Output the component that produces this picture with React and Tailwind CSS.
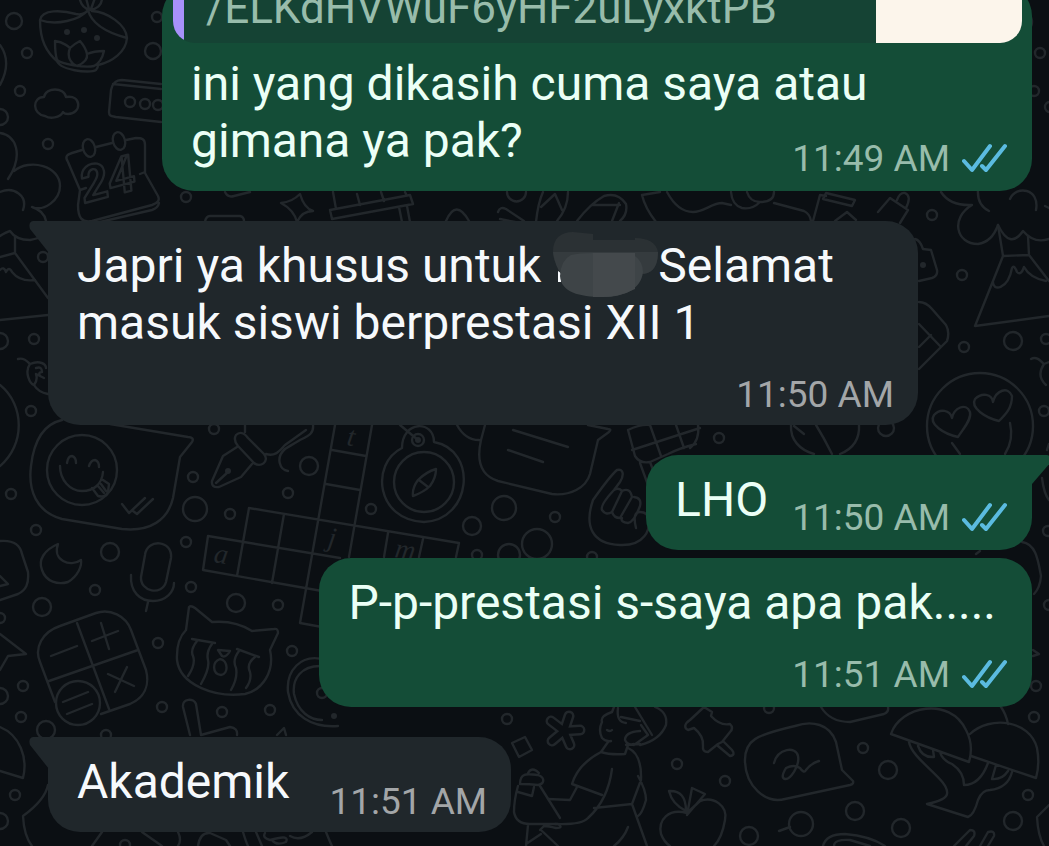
import React from 'react';

const rings = [
  [14, 21, 8], [27, 53, 5], [20, 91, 5], [153, 51, 8], [157, 17, 5], [0, 117, 8], [48, 144, 5], [186, 197, 5],
  [130, 102, 5], [145, 104, 5], [158, 105, 5], [43, 257, 5], [34, 339, 5], [0, 341, 8], [31, 411, 5],
  [82, 470, 35], [214, 429, 5], [193, 477, 5], [195, 509, 12], [230, 514, 5], [11, 494, 5], [36, 530, 5],
  [110, 552, 9], [186, 542, 5], [191, 587, 5], [95, 590, 5], [42, 607, 9], [309, 466, 9], [288, 493, 5],
  [236, 603, 9], [278, 605, 5], [0, 618, 5], [424, 482, 30], [418, 440, 6], [371, 509, 5], [504, 508, 12],
  [555, 517, 5], [472, 526, 9], [537, 544, 15], [509, 555, 11], [477, 555, 5], [592, 557, 5], [719, 438, 5],
  [886, 428, 8], [158, 643, 5], [292, 651, 5], [162, 707, 5], [23, 686, 5], [0, 696, 8], [21, 717, 5],
  [46, 730, 9], [222, 712, 5], [270, 710, 5], [106, 735, 5], [15, 795, 5], [0, 821, 8], [155, 757, 17],
  [125, 845, 5], [78, 703, 22], [322, 693, 5], [507, 719, 5], [677, 764, 5], [725, 781, 5], [749, 836, 9],
  [769, 708, 5], [863, 748, 5], [888, 770, 9], [801, 824, 12], [855, 811, 9], [901, 828, 9], [1028, 795, 5],
  [1034, 717, 5], [1013, 821, 9], [932, 215, 5], [962, 275, 5], [964, 347, 5], [1013, 341, 9], [1046, 339, 5],
  [980, 426, 53], [1044, 411, 5], [1048, 531, 5], [1036, 686, 5], [1049, 605, 5], [1022, 22, 10], [1040, 53, 5],
  [1034, 91, 5], [1050, 107, 5],
];

const doodles = [
  // bowl with lotus
  'M40 20C42 9 62 10 76 14C84 16 88 10 88 10C92 26 112 34 127 38C126 52 112 62 98 65M40 20C40 40 46 52 58 62M40 20C56 26 80 20 88 10M92 11C107 12 126 24 127 38',
  'M55 41C64 42 70 48 70 48Q74 44 80 41Q86 48 87 54Q94 51 104 51C102 60 98 64 94 66C84 68 62 64 57 60C55 54 55 46 55 41ZM70 48C66 58 72 64 77 66M87 54C88 60 82 64 77 66M57 60C58 70 90 74 96 70Q98 68 98 65',
  'M80 0Q82 8 90 10Q102 8 102 -2M86 -2L89 9M95 -2L91 9M0 45C8 56 8 70 0 85',
  // cloud, box
  'M45 116C32 114 32 97 44 97C46 87 64 87 66 97C82 94 82 114 68 114Q64 114 63 112C60 118 50 119 45 116Z',
  'M161 84L122 80C116 80 112 84 111 90L109 112C109 116 111 116 116 117L161 122M113 84L161 89',
  // flower and calendar
  'M0 133C16 135 24 155 8 179M14 171C30 158 60 166 60 186C60 200 44 212 32 207C42 210 45 216 46 221M0 192C14 186 28 196 23 210',
  'M82 150L72 153C66 155 65 157 68 162L80 190L78 205C78 218 82 223 92 221L152 205C158 203 160 200 158 196L145 173L145 145C145 139 142 138 136 138L126 140M96 147L112 143M80 190L86 188M140 174L145 172M159 203Q158 208 152 210L100 222',
  // tree on the left edge
  'M0 236Q6 232 10 231Q16 240 30 240Q40 238 42 236M15 236L15 253L0 257M15 253L48 298M0 270Q4 266 6 272Q9 266 12 272Q20 282 35 280M0 320L48 315',
  'M18 359C24 357 28 362 30 364C40 360 46 364 46 368M30 364C24 372 30 384 34 385Q38 380 36 374L44 378M34 385Q38 392 48 394M36 368Q42 366 42 372Q38 372 40 376M0 385C25 405 25 445 0 466',
  // chat bubble with a smiley
  'M62 420C44 424 34 440 31 466C28 490 36 512 62 519L122 529C150 532 168 520 173 498L180 457L192 442C194 439 192 437 188 437L110 424',
  'M67 463Q68 456 72 456Q76 457 76 463M89 466Q91 460 95 460Q99 461 99 467M60 466C60 480 70 491 82 491C94 491 102 484 103 472M92 488L98 496Q106 498 108 492L109 484L103 480M98 486L104 493M101 484L106 491M122 504L129 513L145 498M133 511L137 514L153 499',
  // pen
  'M237 447L223 456L212 481Q211 488 219 487L241 477L252 464M216 483L228 472M236 435C241 430 246 435 248 438L264 454C270 462 260 468 254 463L238 446Q233 440 236 435ZM245 432L245 425M266 454C276 457 280 450 285 445L306 430M313 425C314 434 308 436 300 440C290 446 288 447 285 449C275 458 280 470 288 471',
  // crossword
  'M249 508L459 543M208 536L340 558M203 570L322 591M249 508L237 576M284 514L272 583M208 536L203 570M335 425L300 623L322 627M372 425L349 557M332 450L366 456M326 484L360 490M388 533L384 557M423 539L419 557M459 543L456 557',
  // mic, moon
  'M145 555C147 538 173 540 171 558L166 582C162 596 140 592 141 577ZM131 575C130 592 140 601 153 601C166 601 174 592 174 583M148 602L146 611',
  'M58 544C44 550 38 560 42 570C46 582 58 585 68 582C78 576 82 566 81 560C70 568 52 560 58 544Z',
  'M0 541C12 540 20 544 22 554L28 572C29 584 26 590 18 594L0 600M0 576L8 584L0 586',
  // compass
  'M402 448C370 464 376 520 424 522C472 520 478 450 434 442C434 420 402 420 402 448M400 425L418 440M436 469Q426 472 418 480Q412 488 413 496Q424 492 430 486Q436 478 436 469ZM419 480L428 487',
  'M485 425L481 440C476 462 482 476 498 481L552 494C570 496 586 488 590 474L598 440L609 432Q612 429 608 429L588 425M457 425Q465 440 479 440M513 430L568 447M508 450L543 462',
  // hand
  'M617 470Q610 476 593 500C584 526 592 544 620 545C644 546 652 530 648 515M617 470C624 468 624 476 620 482L614 490Q600 505 602 510Q606 516 612 512M612 512L622 491Q630 487 632 497L620 518Q614 518 612 512M622 518Q620 522 628 523Q634 522 640 506Q642 498 634 497M636 528Q632 512 640 512Q648 512 649 520M614 490Q619 487 622 491',
  'M628 430L635 456Q640 464 650 462L668 454Q680 448 696 444M628 430Q640 424 650 425M632 450L700 428M650 425L661 456M676 425L684 448M640 463L648 485M650 462L655 475M698 425Q700 440 690 448',
  'M791 425C790 440 800 450 814 454M859 425C860 442 850 450 840 454M794 426L804 434M816 425C824 438 826 442 832 454',
  // calculator
  'M96 613L60 626C42 632 34 648 40 662L55 702M96 613C110 608 126 616 131 630L146 670C150 686 144 698 130 704L101 714M77 623L109 709M49 681L138 650M51 656L77 646M92 641L118 631M101 623L109 649M108 674L134 686M127 667L115 692M63 702L88 692M67 714L92 704M0 634L26 654L8 656L0 670',
  // crying cat
  'M186 630L189 607Q191 605 195 608L212 622Q235 620 252 631L274 629Q278 628 278 633L270 650C275 672 262 690 245 694C215 698 180 685 177 660Q176 640 186 630M192 639L215 643M237 649L259 657',
  'M197 641Q190 650 193 656Q196 664 188 676M212 644Q206 652 208 660Q210 668 201 684M239 651Q232 660 236 668Q238 678 231 690M255 657Q246 664 250 672Q252 680 246 688M218 650L230 651Q226 658 222 656ZM220 659C212 662 212 674 221 675C229 674 228 660 220 659Z',
  // magnifier and sticks
  'M326 660C300 652 286 672 288 692C292 716 312 728 338 726M320 666C302 666 292 678 294 694C298 712 310 720 322 720M190 735L183 707C182 698 194 698 196 704L201 735L230 727Q238 728 237 735M277 735L284 728L286 735',
  'M0 727C20 735 28 758 23 778L0 771M48 785Q45 800 23 816Q24 836 32 846M102 832L92 846M142 832L162 846M178 832Q182 840 178 846M198 846Q200 832 210 833L226 840L230 846M243 832Q246 842 248 846M256 832L262 846M265 833Q262 838 270 840Q290 834 286 842Q276 846 272 840M290 836Q300 842 312 832M326 832Q330 842 332 846',
  // hiker
  'M614 707L612 712Q600 716 602 722Q598 730 602 738Q606 742 611 741M608 742L601 752M607 730Q610 732 612 730M601 752Q610 755 625 754L628 745M601 752Q578 764 572 784L602 795M628 748Q642 754 641 780L632 804L594 808M612 769Q608 800 588 818Q582 825 555 824M577 787L570 800L548 799M638 776Q646 790 646 800Q642 814 638 816M632 804L647 846M628 827Q624 838 614 846',
  'M618 708Q616 722 626 723M621 717L640 721M635 707L652 735M655 707Q668 712 666 725Q660 740 640 745M640 731Q625 732 625 740Q628 746 634 744M641 725L648 735L634 745M626 745L640 744M512 743L525 737L532 750L519 757Z',
  'M540 786L560 818M520 784C520 772 528 774 538 775C546 778 544 784 538 785C530 784 522 784 520 784ZM528 773Q532 766 539 773M518 786Q514 800 514 812Q516 824 530 824L558 824Q564 828 556 828Q548 826 544 826L540 830M518 792L532 796L534 787M528 825L526 846M541 830L558 846M541 834L526 844',
  // pin, apple
  'M694 728L688 730C684 728 684 724 690 720L704 707L712 712L711 716Q720 726 730 724Q734 728 730 732L722 742L718 744L708 752Q702 752 703 746Q704 736 694 728M718 746L730 756Q736 755 732 750L724 742',
  'M687 813C668 808 658 820 661 834Q664 842 670 846M687 813L700 801C714 796 728 806 725 820Q722 838 714 846M687 815L692 788L705 794L687 815M686 811Q672 804 669 791Q686 790 686 811',
  'M795 726C812 720 830 724 836 742L842 770L853 781Q854 784 850 785L785 799C765 804 746 786 745 762C744 740 756 735 795 726M774 763C778 748 796 746 798 756C800 766 790 780 785 779Q780 778 786 768Q794 764 800 768Q804 774 806 770Q810 764 819 761M779 831L790 827M821 707Q830 722 850 722L884 714Q889 712 888 707',
  // mushrooms
  'M891 734C900 706 950 696 966 730Q974 745 969 762ZM970 734C990 715 1030 720 1037 748Q1040 764 1036 778L971 756M909 742C912 760 950 780 947 794Q946 800 927 804L968 817Q974 815 978 800Q982 790 990 790Q1008 788 1012 772M918 746Q922 758 934 757L933 750M940 752Q942 760 952 764Q964 772 964 785Q980 785 988 763M996 765L992 779Q1002 780 1008 771M1001 707Q1006 714 1008 724',
  'M823 846Q826 834 845 834Q870 836 885 846M834 846Q834 839 850 840L870 846M954 846L970 830Q976 830 974 836L966 846M980 846L988 832Q995 830 994 836L988 846M1049 805L1037 817Q1038 836 1044 846',
  // volcano and the right edge
  'M941 192Q950 206 972 205C950 218 956 244 978 244Q992 242 998 225Q1010 250 1023 231Q1034 244 1049 239M978 190Q977 205 989 211M1010 199C1016 185 1040 188 1036 210M1045 206L1049 208',
  'M998 225L1003 256L1029 255L1028 236M1003 256L975 326L1049 316M1029 255L1049 281M993 281C992 292 1008 290 1012 268Q1014 264 1017 272Q1021 276 1024 267Q1030 278 1046 281',
  'M878 212L890 198L908 210L900 223M897 200Q900 192 905 193Q912 196 906 208M915 239Q920 240 923 249L931 250L937 270Q938 276 932 278L919 281M919 302Q926 302 932 309L946 325Q950 332 947 341L919 369M919 324L940 346M919 347L931 335',
  'M958 437C944 434 928 424 934 415C940 408 950 410 952 418C954 408 966 402 970 412C972 420 962 430 958 437ZM999 421C986 418 970 408 975 399C982 392 992 394 993 402C996 390 1008 386 1012 396C1012 408 1006 414 999 421ZM1010 423Q1014 440 1005 454M952 443L960 454',
  'M1031 359C1036 356 1040 360 1044 364L1049 362M1044 364Q1036 376 1046 385M1042 478Q1044 494 1049 500M976 554L980 551M1022 542C1036 544 1038 560 1041 576Q1040 588 1034 594M1033 650L1039 654L1033 656M1047 450L1049 444',
  // strip under the first message
  'M205 222Q206 216 210 216L240 216Q244 217 244 221M281 203Q292 202 300 194Q304 208 313 211Q302 211 297 222Q294 210 281 203ZM330 210L410 195L413 204L332 219ZM333 192L336 209M357 194L360 205M381 192L384 201M405 192L407 196M399 207L402 222M407 206L410 222M225 192Q228 198 234 196L250 192',
  'M446 221Q456 198 469 221M507 192A9 9 0 0 0 526 192M498 212Q500 206 506 209L524 221M500 219L515 222M536 222Q538 203 543 192M568 192Q568 208 557 221M541 207L555 194L562 210M577 221Q590 204 604 196Q618 192 626 204Q628 214 620 221M592 205L620 205M619 203L612 221M656 222Q645 208 642 195L660 192',
  'M667 192C674 205 683 212 693 212C704 212 712 203 722 203L731 205M731 192Q732 205 742 208Q752 210 760 202M747 192Q750 202 760 202Q774 202 774 192M774 203L804 211Q810 214 811 221M813 221L820 195L826 196M826 193L823 199L852 206L855 200ZM835 221L847 212L856 220',
];

function Wallpaper() {
  return (
    <svg className="absolute inset-0 h-full w-full" fill="none" stroke="#22272b" strokeWidth="2.4" strokeLinejoin="round" strokeLinecap="round" aria-hidden="true">
      {rings.map(([x, y, r]) => <circle key={`${x}-${y}`} cx={x} cy={y} r={r} />)}
      {doodles.map((d) => <path key={d} d={d} />)}
      <ellipse cx="89" cy="148" rx="6" ry="9" transform="rotate(-15 89 148)" />
      <ellipse cx="119" cy="141" rx="6" ry="9" transform="rotate(-15 119 141)" />
      <g fill="#22272b" stroke="none">
        <circle cx="67" cy="32" r="3" /><circle cx="84" cy="30" r="3" /><circle cx="97" cy="38" r="3" />
        <circle cx="228" cy="471" r="3" /><circle cx="418" cy="440" r="3" /><circle cx="334" cy="716" r="3" />
        <circle cx="923" cy="265" r="3" />
      </g>
      <path d="M564 731L569 716M564 731L580 730M564 731L570 745M564 731L552 741M564 731L551 721" strokeWidth="11" />
      <path d="M564 731L569 716M564 731L580 730M564 731L570 745M564 731L552 741M564 731L551 721" strokeWidth="6" stroke="#0b0f13" />
      <text x="85" y="203" transform="rotate(-15 85 203)" className="font-['Roboto'] text-[50px] font-bold italic">24</text>
      <g fill="#22272b" stroke="none" className="font-['Liberation_Serif'] text-[28px] italic">
        <text x="213" y="562" transform="rotate(9 213 562)">a</text>
        <text x="346" y="445" transform="rotate(9 346 445)">t</text>
        <text x="327" y="546" transform="rotate(9 327 546)">j</text>
        <text x="394" y="557" transform="rotate(9 394 557)">m</text>
      </g>
    </svg>
  );
}

function ReadTicks() {
  return (
    <svg className="h-8 w-[46px]" viewBox="0 0 46 32" fill="none" stroke="#5bbbe0" strokeWidth="4" strokeLinecap="round" strokeLinejoin="round" role="img" aria-label="Read">
      <path d="M2 18L10 27L28 3M20 23L24 27L43 3" />
    </svg>
  );
}

function Time({ children, out, className = '' }) {
  return (
    <span className={`flex shrink-0 items-center justify-end gap-3 text-[37px] leading-[44px] ${out ? 'text-[#98bcab]' : 'text-[#a3a6a8]'} ${className}`}>
      <time>{children}</time>
      {out && <ReadTicks />}
    </span>
  );
}

function Bubble({ out, tail, className = '', children }) {
  const side = out
    ? `self-end bg-[#144d37] text-[#ebfff6] pb-[10px] ${tail ? 'rounded-tr-none' : ''}`
    : `self-start bg-[#20272b] text-[#f6f9fc] pb-2 ${tail ? 'rounded-tl-none' : ''}`;
  return (
    <article className={`relative max-w-[870px] rounded-[32px] pl-[29px] pr-6 ${side} ${className}`}>
      {tail && !out && (
        <svg className="absolute -left-[19px] top-0 h-8 w-5" viewBox="0 0 20 32" fill="#20272b" aria-hidden="true">
          <path d="M4 0H20V32L1 8Q-1 1 4 0Z" />
        </svg>
      )}
      {tail && out && (
        <svg className="absolute -right-[19px] top-0 h-8 w-5" viewBox="0 0 20 32" fill="#144d37" aria-hidden="true">
          <path d="M0 0H16Q21 1 19 8L1 29H0Z" />
        </svg>
      )}
      {children}
    </article>
  );
}

function HiddenName() {
  return (
    <span className="relative inline-block h-8 w-[105px]" role="img" aria-label="hidden name">
      <svg className="absolute -top-5 left-0 h-[68px] w-[106px]" viewBox="0 0 106 68" aria-hidden="true">
        <path d="M5 41L8 43V52H5Z" fill="#f6f9fc" />
        <path d="M0 22C0 8 8 2 20 2L40 4V10H82V8Q102 8 105 22C105 38 98 44 88 44H14C4 38 0 30 0 22Z" fill="#2b3134" />
        <path d="M0 22H105C105 38 98 44 88 44H8Q2 36 0 22Z" fill="#353b3e" />
        <path d="M18 25Q26 23 40 23H82V26Q90 32 90 42C88 60 70 67 50 67C26 67 8 62 7 46Q8 30 18 25Z" fill="#3e4447" />
        <path d="M40 23H82V59Q66 67 50 67H40Z" fill="#44494c" />
      </svg>
    </span>
  );
}

export default function App() {
  return (
    <main className="relative min-h-screen overflow-hidden bg-[#0b0f13] font-['Roboto',sans-serif]">
      <Wallpaper />
      <section className="relative flex flex-col pb-4 pl-12 pr-[17px] text-[48px] leading-[57px]">
        <Bubble out className="-mt-4 flow-root w-full">
          <blockquote className="-ml-[18px] -mr-[14px] flex overflow-hidden rounded-b-[22px] bg-[#154334]">
            <div className="w-[11px] bg-[#a791fa]" />
            <p className="min-w-0 flex-1 whitespace-nowrap pb-[11px] pl-[22px] text-[44px] leading-[48px] text-[#98bcab]">/ELKdHVWuF6yHF2uLyxktPB</p>
            <div className="w-[146px] shrink-0 bg-[#fcf5eb]" />
          </blockquote>
          <p className="mt-3">
            ini yang dikasih cuma saya atau gimana ya pak?
            <Time out className="float-right mt-[25px]">11:49 AM</Time>
          </p>
        </Bubble>

        <Bubble tail className="mt-[30px] w-full pt-4">
          <p>Japri ya khusus untuk <HiddenName />Selamat masuk siswi berprestasi XII 1</p>
          <Time className="mt-[22px]">11:50 AM</Time>
        </Bubble>

        <Bubble out tail className="mt-[30px] flex items-end gap-6 pt-4">
          <p className="mb-3">LHO</p>
          <Time out>11:50 AM</Time>
        </Bubble>

        <Bubble out className="mt-2 pt-4">
          <p className="pr-3">P-p-prestasi s-saya apa pak.....</p>
          <Time out className="mt-[22px]">11:51 AM</Time>
        </Bubble>

        <Bubble tail className="mt-[30px] flex items-end gap-10 pt-4">
          <p className="mb-[14px]">Akademik</p>
          <Time>11:51 AM</Time>
        </Bubble>
      </section>
    </main>
  );
}
